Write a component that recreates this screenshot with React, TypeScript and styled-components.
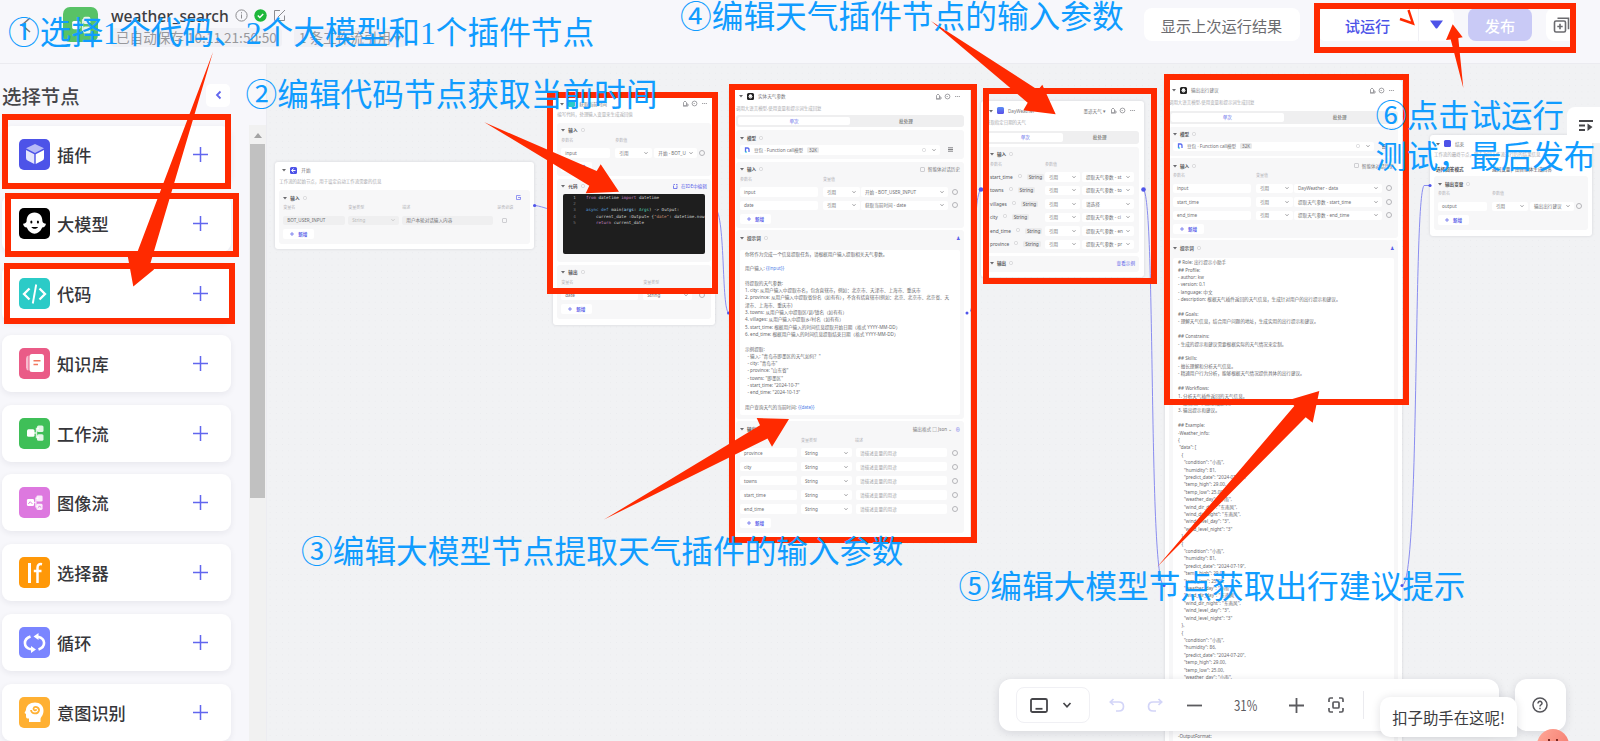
import React from 'react';
import styled, { createGlobalStyle } from 'styled-components';

const Global = createGlobalStyle`
  * { box-sizing: border-box; }
  html, body { margin: 0; padding: 0; overflow: hidden; }
  body { font-family: "Noto Sans", "Noto Sans CJK SC", sans-serif; color: #333; }
  svg { display: block; flex: none; }
`;

const Page = styled.div`
  position: relative;
  width: 1600px;
  height: 741px;
  overflow: hidden;
  display: flex;
  flex-direction: column;
  background: #f7f7fb;
`;

/* ---------- top bar ---------- */
const TopBar = styled.header`
  height: 64px;
  flex: none;
  display: flex;
  align-items: flex-start;
  border-bottom: 1px solid #ebebf0;
  padding: 7px 0 0 20px;
`;
const FlowBadge = styled.div`
  width: 35px;
  height: 35px;
  margin-left: 31px;
  border-radius: 7px;
  background: #58c266;
  display: grid;
  place-items: center;
`;
const TitleBlock = styled.div`
  margin-left: 13px;
  width: 620px;
`;
const TitleRow = styled.div`
  height: 19px;
  display: flex;
  align-items: center;
  gap: 6px;
  font-size: 15.6px;
  font-weight: 500;
  color: #3c3c40;
  margin-top: -1px;
`;
const MetaRow = styled.div`
  margin-top: 3px;
  display: flex;
  gap: 12px;
`;
const Meta = styled.span`
  height: 19px;
  padding: 0 5px;
  border-radius: 4px;
  background: #f0f0f5;
  font: 13.6px/19px "Noto Sans CJK SC", sans-serif;
  color: #98989c;
  white-space: nowrap;
`;
const Actions = styled.div`
  margin-left: auto;
  margin-right: 24px;
  display: flex;
  align-items: center;
  margin-top: 1px;
`;
const Button = styled.button<{ $w: number; $primary?: boolean; $gap?: number; $accent?: boolean }>`
  width: ${p => p.$w}px;
  height: 33px;
  margin-left: ${p => p.$gap ?? 0}px;
  padding: 0;
  border: 0;
  border-radius: 8px;
  background: ${p => (p.$primary ? '#c9caf6' : '#fff')};
  color: ${p => (p.$primary ? '#fff' : p.$accent ? '#4d53e8' : '#6b6b6f')};
  font: ${p => (p.$primary || p.$accent ? 500 : 400)} 15.2px "Noto Sans CJK SC", sans-serif;
  display: flex;
  align-items: center;
  justify-content: center;
`;
const RunGroup = styled.div`
  display: flex;
  margin-left: 18px;
  background: #fff;
  border-radius: 8px;
  & > * + * { border-left: 1px solid #f0f0f5; border-radius: 0 8px 8px 0; }
`;

/* ---------- sidebar ---------- */
const Body = styled.div`
  flex: 1;
  min-height: 0;
  display: flex;
`;
const Sidebar = styled.aside`
  width: 267px;
  flex: none;
  border-right: 1px solid #ececf1;
`;
const SideHead = styled.div`
  height: 61px;
  padding: 2px 36px 0 2px;
  display: flex;
  align-items: center;
  justify-content: space-between;
  font: 500 19.4px "Noto Sans CJK SC", sans-serif;
  color: #46464a;
`;
const Collapse = styled.div`
  width: 24px;
  height: 23px;
  margin-top: -1px;
  border-radius: 5px;
  background: #fff;
  display: grid;
  place-items: center;
`;
const SideBody = styled.div`
  display: flex;
  justify-content: space-between;
  height: 616px;
`;
const NodeList = styled.div`
  padding: 0.5px 0 0 2px;
  display: flex;
  flex-direction: column;
  gap: 12.8px;
`;
const NodeItem = styled.div`
  width: 229px;
  height: 57px;
  flex: none;
  padding: 0 23px 0 17px;
  border-radius: 9px;
  background: #fff;
  box-shadow: 0 2px 6px rgba(30, 30, 60, 0.07);
  display: flex;
  align-items: center;
  font: 500 17.2px "Noto Sans CJK SC", sans-serif;
  color: #36363a;
`;
const ItemIcon = styled.div<{ $bg: string }>`
  width: 31px;
  height: 31px;
  margin-right: 7px;
  border-radius: 5px;
  background: ${p => p.$bg};
  display: grid;
  place-items: center;
`;
const Grow = styled.span`flex: 1;`;
const ScrollTrack = styled.div`
  width: 17px;
  background: #f1f1f1;
  display: flex;
  flex-direction: column;
  align-items: center;
`;
const ScrollArrow = styled.div`
  width: 0;
  height: 0;
  margin: 8px 0 6px;
  border: 4px solid transparent;
  border-top: 0;
  border-bottom: 5px solid #a3a3a3;
`;
const Thumb = styled.div`
  width: 15px;
  height: 354px;
  background: #c1c1c1;
`;

/* ---------- canvas nodes ---------- */
const Canvas = styled.main`
  flex: 1;
  background: #f1f2f4 radial-gradient(circle, #eaebee 0.6px, transparent 0.9px) 0 0 / 6.2px 6.2px;
`;
const NodeCard = styled.section<{ $x: number; $y: number; $w: number; $h: number; $pad?: number }>`
  position: absolute;
  left: ${p => p.$x}px;
  top: ${p => p.$y}px;
  width: ${p => p.$w}px;
  height: ${p => p.$h}px;
  padding: 4px ${p => p.$pad ?? 4}px 0;
  border-radius: 3px;
  background: #fff;
  box-shadow: 0 0 3px rgba(30, 30, 50, 0.14);
  overflow: hidden;
  font-size: 4.6px;
  line-height: 6px;
  color: #66666a;
  white-space: nowrap;
`;
const Head = styled.div`
  height: 9px;
  display: flex;
  align-items: center;
  gap: 4px;
  padding: 0 3px;
  color: #77777b;
`;
const HeadIcon = styled.div<{ $bg: string }>`
  width: 7px;
  height: 7px;
  border-radius: 1.5px;
  background: ${p => p.$bg};
  display: grid;
  place-items: center;
`;
const Desc = styled.div<{ $h: number }>`
  height: ${p => p.$h}px;
  padding-top: 3px;
  font-size: 4.45px;
  color: #a8a8ac;
`;
const Tabs = styled.div`
  height: 12.5px;
  padding: 2px;
  border-radius: 3px;
  background: #efeff0;
  display: grid;
  grid-template-columns: 1fr 1fr;
  margin-bottom: 3px;
  text-align: center;
  line-height: 8px;
`;
const Tab = styled.div<{ $on?: boolean }>`
  border-radius: 2px;
  background: ${p => (p.$on ? '#fff' : 'transparent')};
  color: ${p => (p.$on ? '#5a5fe9' : '#555')};
`;
const Section = styled.div<{ $h: number }>`
  height: ${p => p.$h}px;
  margin-bottom: 2.6px;
  padding: 0 4px;
  border-radius: 3px;
  background: #f7f7f8;
  overflow: hidden;
`;
const SecHead = styled.div`
  height: 15px;
  display: flex;
  align-items: center;
  gap: 3px;
  font-weight: 600;
  color: #58585c;
`;
const Note = styled.span<{ $accent?: boolean }>`
  font-weight: 400;
  color: ${p => (p.$accent ? '#5a5fe9' : '#77777b')};
`;
const Cols = styled.div<{ $c: string; $label?: boolean }>`
  display: grid;
  grid-template-columns: ${p => p.$c};
  align-items: center;
  ${p => p.$label && 'height: 6.5px; margin-bottom: 4px; font-size: 4px; color: #b4b4b8;'}
`;
const Rows = styled.div<{ $gap?: number }>`
  display: flex;
  flex-direction: column;
  gap: ${p => p.$gap ?? 4}px;
`;
const Field = styled.div<{ $mute?: boolean; $mr?: number }>`
  height: 9.5px;
  margin-right: ${p => p.$mr ?? 3}px;
  padding: 0 4px;
  border-radius: 2px;
  background: ${p => (p.$mute ? '#efeff0' : '#fff')};
  display: flex;
  align-items: center;
  justify-content: space-between;
  overflow: hidden;
  color: #707074;
`;
const Chip = styled.span`
  padding: 0 2px;
  border-radius: 1.5px;
  background: #ebebec;
`;
const ParamName = styled.span`
  display: flex;
  gap: 5px;
  font-size: 4.8px;
  color: #59595d;
`;
const AddMark = styled.div`
  width: 31px;
  height: 10px;
  margin-top: 4px;
  border-radius: 2px;
  background: #fff;
  color: #5a5fe9;
  font-weight: 600;
  display: flex;
  align-items: center;
  justify-content: center;
  gap: 4px;
`;
const Prompt = styled.pre<{ $h: number; $lh: number }>`
  height: ${p => p.$h}px;
  margin: 3px 0 0;
  padding: 1px 5px;
  border-radius: 2px;
  background: #fff;
  overflow: hidden;
  font: 4.6px/${p => p.$lh}px "Noto Sans", "Noto Sans CJK SC", sans-serif;
  color: #68686c;
`;
const Var = styled.span`color: #4f7fe8;`;
const CodeBox = styled.pre`
  height: 60.5px;
  margin: 0 2px;
  padding: 1px 0 0 10px;
  border-radius: 2px;
  background: #1e1e1e;
  overflow: hidden;
  font: 4.2px/6.4px "DejaVu Sans Mono", monospace;
  color: #d4d4d4;
`;
const Tok = styled.span<{ $c: string }>`color: ${p => p.$c};`;
const RingMark = styled.i`
  width: 6px;
  height: 6px;
  border: 0.8px solid #b5b5b9;
  border-radius: 50%;
  display: block;
`;
const Check = styled.i`
  width: 5px;
  height: 5px;
  border: 0.8px solid #ceced2;
  border-radius: 1px;
  display: block;
`;

/* ---------- overlays ---------- */
const Layer = styled.svg`
  position: absolute;
  left: 0;
  top: 0;
  pointer-events: none;
`;
const Frame = styled.div<{ $x: number; $y: number; $r: number; $b: number }>`
  position: absolute;
  left: ${p => p.$x}px;
  top: ${p => p.$y}px;
  width: ${p => p.$r - p.$x}px;
  height: ${p => p.$b - p.$y}px;
  border: 6.5px solid #ff2a00;
`;
const Callout = styled.div<{ $x: number; $y: number; $size?: number }>`
  position: absolute;
  left: ${p => p.$x}px;
  top: ${p => p.$y}px;
  font: ${p => p.$size ?? 31.7}px/41px "Liberation Serif", "Noto Sans CJK SC", serif;
  color: #109cff;
  white-space: pre;
`;
const Dock = styled.div`
  position: absolute;
  left: 999px;
  top: 679px;
  display: flex;
  gap: 15.5px;
`;
const DockPanel = styled.div<{ $w: number }>`
  width: ${p => p.$w}px;
  height: 52px;
  border-radius: 12px;
  background: #fff;
  box-shadow: 0 2px 10px rgba(20, 20, 40, 0.12);
  display: flex;
  align-items: center;
  ${p => p.$w < 100 && 'justify-content: center;'}
`;
const ModePicker = styled.div`
  width: 74px;
  height: 36px;
  margin: 0 19px 0 17px;
  padding-right: 5px;
  border: 1px solid #f0f0f4;
  border-radius: 8px;
  display: flex;
  align-items: center;
  justify-content: center;
  gap: 14px;
`;
const Zoom = styled.span`
  width: 24px;
  margin: 0 31px 0 32px;
  font: 14px "Noto Sans CJK SC", sans-serif;
  color: #5b5b5f;
  transform: scaleX(0.82);
  transform-origin: left;
`;
const Divider = styled.i`
  width: 1px;
  height: 28px;
  margin-left: 19px;
  background: #ebebef;
`;
const Tip = styled.div`
  position: absolute;
  left: 1380px;
  top: 697px;
  width: 137px;
  height: 40px;
  border-radius: 10px 10px 2px 10px;
  background: #fff;
  box-shadow: 0 1px 10px rgba(20, 20, 40, 0.13);
  font: 15.4px/40px "Noto Sans CJK SC", sans-serif;
  color: #3c3c40;
  text-align: center;
`;
const Mascot = styled.div`
  position: absolute;
  left: 1537px;
  top: 729px;
  width: 32px;
  height: 32px;
  border-radius: 50%;
  background: linear-gradient(120deg, #ffa898, #f4776a);
  display: flex;
  justify-content: center;
  gap: 6px;
  padding-top: 10px;
  &::before, &::after { content: ''; width: 2px; height: 4px; background: #7b2620; }
`;
const SideTab = styled.div`
  position: absolute;
  left: 1567px;
  top: 107px;
  width: 33px;
  height: 36px;
  border-radius: 8px 0 0 8px;
  background: #fff;
  padding: 12px 0 0 11px;
`;

const Caret = ({ s = 4, c = '#77777b' }: { s?: number; c?: string }) => (
  <svg width={s} height={s} viewBox="0 0 8 8"><path d="M1 2.5 4 5.5 7 2.5" fill="none" stroke={c} strokeWidth="1.5" /></svg>
);
const Fold = () => (
  <svg width="4" height="4" viewBox="0 0 8 8"><path d="M0 2h8L4 7z" fill="#6a6a6e" /></svg>
);
const Info = () => (
  <svg width="4" height="4" viewBox="0 0 8 8"><circle cx="4" cy="4" r="3.3" fill="none" stroke="#c4c4c8" /></svg>
);
const PlusMark = () => (
  <svg width="15" height="15" viewBox="0 0 15 15"><path d="M7.5 0v15M0 7.5h15" stroke="#6166ee" strokeWidth="1.5" /></svg>
);
const AddButton = () => (
  <AddMark><svg width="4" height="4" viewBox="0 0 4 4"><path d="M2 0v4M0 2h4" stroke="#5a5fe9" strokeWidth=".7" /></svg>新增</AddMark>
);

const HeadTools = () => (
  <svg width="26" height="7" viewBox="0 0 26 7" fill="none" stroke="#8c8c90" strokeWidth=".8">
    <path d="M1.5 5.8V2.5L3 1l1.5 1.5v3.3zM4.5 4h1.5v2H1" /><circle cx="12.5" cy="3.5" r="2.4" /><path d="M11.6 3.5h1.8M20 3.5h5" strokeDasharray="1.2 .7" />
  </svg>
);
const Ghost = ({ s }: { s: number }) => (
  <svg width={s} height={s} viewBox="0 0 24 24">
    <path d="M12 1.5c-5 0-7.6 3.6-7.6 8.4-.2 1.7-1.5 2.1-3.4 2.4.3 2.3 1.7 3.4 3.6 3.6C6.2 19.700 9 21.800 12 21.800s5.800-2.100 7.400-5.900c1.900-.2 3.300-1.300 3.600-3.600-1.900-.3-3.200-.7-3.400-2.400C19.600 5.100 17 1.500 12 1.500z" fill="#fff" />
    <ellipse cx="9" cy="10.500" rx="1" ry="1.500" /><ellipse cx="15.300" cy="10.500" rx="1" ry="1.500" />
    <path d="M9 15.300h6.400c-.8 2.300-5.600 2.300-6.400 0z" />
  </svg>
);
const Blocks = ({ s = 20, pic }: { s?: number; pic?: boolean }) => (
  <svg width={s} height={s} viewBox="0 0 20 20">
    <path d="M8 10h3M14 5.500h-2.500v9H14" stroke="#fff" strokeWidth="1.400" fill="none" opacity=".8" />
    <rect x="2" y="6.300" width="7.500" height="7.500" rx="1.500" fill="#fff" />
    <rect x="12" y="2.500" width="6.500" height="6.500" rx="1.500" fill="#fff" opacity=".85" />
    <rect x="12" y="11.300" width="6.500" height="6.500" rx="1.500" fill="#fff" opacity=".85" />
    {pic && <path d="M3.500 11.500l2-2.300 2.300 2.300M13.500 15.500l1.500-1.500 2 1" stroke="#dd78df" fill="none" />}
  </svg>
);

const items: { name: string; bg: string; icon: React.ReactNode }[] = [
  { name: '插件', bg: '#4d53e8', icon: (
    <svg width="20" height="22" viewBox="0 0 20 22"><path d="M10 1l9 4.300L10 10 1 5.300z" fill="#fff" opacity=".6" /><path d="M1 7l8.300 4.200V21L3 17.800Q1 17 1 15z" fill="#fff" opacity=".85" /><path d="M19 7l-8.300 4.200V21l6.300-3.200Q19 17 19 15z" fill="#fff" /></svg>) },
  { name: '大模型', bg: '#000', icon: <Ghost s={25} /> },
  { name: '代码', bg: '#2bcbc7', icon: (
    <svg width="25" height="22" viewBox="0 0 25 22" fill="none" stroke="#fff" strokeWidth="2.300"><path d="M7.500 5.500L2 11l5.500 5.500M17.500 5.500L23 11l-5.500 5.500" /><path d="M14.200 1.500l-3.400 19" strokeWidth="1.900" /></svg>) },
  { name: '知识库', bg: '#ea5b87', icon: (
    <svg width="20" height="20" viewBox="0 0 20 20"><path d="M3.500 2.500v15Q1 17 1 14.500v-9Q1 3 3.500 2.500z" fill="#fff" opacity=".6" /><rect x="4.500" y="1" width="14.500" height="18" rx="2.500" fill="#fff" /><path d="M8.500 7.800h7M8.500 11.500h4.500" stroke="#f2785f" strokeWidth="1.500" /></svg>) },
  { name: '工作流', bg: '#3fbf58', icon: <Blocks /> },
  { name: '图像流', bg: '#dd78df', icon: <Blocks pic s={19} /> },
  { name: '选择器', bg: '#ff9808', icon: (
    <svg width="20" height="24" viewBox="0 0 20 24" fill="none" stroke="#fff"><path d="M4.500 2v20" strokeWidth="3" /><path d="M17 3.300c-3-.7-4.500.6-4.500 3.700v15M8.800 10h7.700" strokeWidth="2.500" /></svg>) },
  { name: '循环', bg: '#7a85ff', icon: (
    <svg width="23" height="20" viewBox="0 0 23 20" fill="none" stroke="#fff" strokeWidth="2.600"><path d="M7.500 3.500C0 6 0 14.500 8 16.300M15.500 16.500C23 14 23 5.500 15 3.700" /><path d="M15.500 0v7l-5-3.500zM8 13v7l5-3.500z" fill="#fff" stroke="none" /></svg>) },
  { name: '意图识别', bg: '#ffb032', icon: (
    <svg width="23" height="23" viewBox="0 0 23 23"><path d="M12 1.500c5 0 8.500 3.500 8.500 8 0 5-2.500 6-3 8.500v3H6v-3.500H4.500Q3 17.500 3 15.500V13L1.500 12 3 9C3 4.500 7 1.500 12 1.500z" fill="#fff" /><path d="M8 9c.5 4.500 7 4.500 8 .5.500-3.500-4.500-5-5.500-2-.3 2 2.500 2.500 3 .8" fill="none" stroke="#ffb032" strokeWidth="1.800" /></svg>) },
];

const Ref = ({ children, mr }: { children: React.ReactNode; mr?: number }) => (
  <Field $mr={mr}>{children}<Caret /></Field>
);

const ModelName = styled.span`
  display: flex;
  align-items: center;
  gap: 4px;
`;
const FieldTools = styled.span`
  display: flex;
  gap: 6px;
`;

const ModelSection = () => (
  <Section $h={29}>
    <SecHead><Fold />模型<Info /></SecHead>
    <Cols $c="1fr 12px">
      <Field $mr={8}>
        <ModelName>
          <svg width="6" height="6" viewBox="0 0 6 6"><path d="M1.500 5V1h2Q5 1 5 3v2" fill="none" stroke="#5a6cf0" strokeWidth="1.300" /><path d="M1 5h2" stroke="#20c5d8" /></svg>
          豆包 · Function call模型 <Chip>32K</Chip>
        </ModelName>
        <FieldTools><Info /><Caret /></FieldTools>
      </Field>
      <svg width="5" height="5" viewBox="0 0 5 5"><path d="M0 .8h5M0 2.500h5M0 4.200h5" stroke="#66666a" strokeWidth=".8" /></svg>
    </Cols>
  </Section>
);

const InputSection = ({ h, rows }: { h: number; rows: [string, string][] }) => (
  <Section $h={h}>
    <SecHead><Fold />输入<Info /><Grow /><Check /><Note>智能体对话历史</Note></SecHead>
    <Cols $c="83px 1fr" $label><span>参数名</span><span>变量值</span></Cols>
    <Rows>
      {rows.map(([n, v]) => (
        <Cols key={n} $c="83px 38px 1fr 8px">
          <Field $mr={5}>{n}</Field><Ref mr={1}>引用</Ref><Ref mr={4}>{v}</Ref><RingMark />
        </Cols>
      ))}
    </Rows>
    <AddButton />
  </Section>
);

const day = (date: string, hum: string, sky: string) => `     "condition": "${sky}",
     "humidity": ${hum},
     "predict_date": "${date}",
     "temp_high": 29.00,
     "temp_low": 25.00,
     "weather_day": "小雨",
     "wind_dir_day": "东南风",
     "wind_dir_night": "东南风",
     "wind_level_day": "3",
     "wind_level_night": "3"
   },
   {
`;

const advicePrompt = `# Role: 出行提示小助手
## Profile:
- author: kw
- version: 0.1
- language: 中文
- description: 根据天气插件返回的天气信息，生成针对用户的出行提示和建议。

## Goals:
- 理解天气信息，结合用户问题的地址，生成实用的出行提示和建议。

## Constrains:
- 生成的提示和建议需要根据实际的天气情况来定制。

## Skills:
- 擅长理解和分析天气信息。
- 精通用户行为分析，能够根据天气情况提供具体的出行建议。

## Workflows:
1. 分析天气插件返回的天气信息。
2. 结合用户问题生成提示。
3. 输出提示和建议。

## Example:
-Weather_info:
{
 "data": [
   {
${day('2024-07-18', '81', '小雨')}${day('2024-07-19', '81', '小雨')}${day('2024-07-20', '86', '小雨')}
-OutputFormat:
- 以下为根据天气信息给出的出行提示，请注意携带雨具，合理安排时间。`;

const App = () => (
  <Page lang="zh-CN">
    <Global />
    <TopBar>
      <svg width="12" height="16" viewBox="0 0 12 16" style={{ marginTop: 10 }}><path d="M10 1L2 8l8 7" fill="none" stroke="#77777b" strokeWidth="1.600" /></svg>
      <FlowBadge><Blocks s={22} /></FlowBadge>
      <TitleBlock>
        <TitleRow>
          weather_search
          <svg width="13" height="13" viewBox="0 0 13 13" fill="none" stroke="#8c8c90"><circle cx="6.500" cy="6.500" r="5.600" /><path d="M6.500 5.500v4M6.500 3.200v1.200" /></svg>
          <svg width="13" height="13" viewBox="0 0 13 13"><circle cx="6.500" cy="6.500" r="6.200" fill="#1eb83b" /><path d="M3.800 6.500l2 2 3.400-3.600" fill="none" stroke="#fff" strokeWidth="1.400" /></svg>
          <svg width="13" height="13" viewBox="0 0 13 13" fill="none" stroke="#8c8c90"><path d="M7 1.500H1.500v10h10V6.500M5 8l7-7" /></svg>
        </TitleRow>
        <MetaRow><Meta>已自动保存 10:11 21:50:50</Meta><Meta>1 条工作流引用 ▾</Meta></MetaRow>
      </TitleBlock>
      <Actions>
        <Button $w={156}>显示上次运行结果</Button>
        <RunGroup>
          <Button $w={100} $accent>试运行</Button>
          <Button $w={36}><svg width="13" height="9" viewBox="0 0 13 9"><path d="M0 .5h13L7.500 8q-1 1-2 0z" fill="#4d53e8" /></svg></Button>
        </RunGroup>
        <Button $w={64} $gap={14.5} $primary>发布</Button>
        <Button $w={30} $gap={14}><svg width="17" height="16" viewBox="0 0 17 16" fill="none" stroke="#6b6b6f" strokeWidth="1.600"><rect x="1.500" y="4" width="11" height="11" rx="1.500" /><path d="M4.500 1.300h11v11M7 6.800v5.400M4.300 9.500h5.400" /></svg></Button>
      </Actions>
    </TopBar>

    <Body>
      <Sidebar>
        <SideHead>选择节点
          <Collapse><svg width="7" height="10" viewBox="0 0 7 10"><path d="M5.500 1.500L2 5l3.500 3.500" fill="none" stroke="#6166ee" strokeWidth="1.800" /></svg></Collapse>
        </SideHead>
        <SideBody>
          <NodeList>
            {items.map(i => (
              <NodeItem key={i.name}><ItemIcon $bg={i.bg}>{i.icon}</ItemIcon><Grow>{i.name}</Grow><PlusMark /></NodeItem>
            ))}
          </NodeList>
          <ScrollTrack><ScrollArrow /><Thumb /></ScrollTrack>
        </SideBody>
      </Sidebar>
      <Canvas />
    </Body>

    <Layer width="1600" height="741" fill="none" stroke="#8a8df0" strokeWidth="1">
      <path d="M535 205.500C545 207 548 210 556 210M714 208C726 208 721 312 729 313M968 313C980 313 970 189.500 982 189.500M1143 189.500C1156 189.500 1148 585 1164 585.500M1402 585.500C1420 585 1413 200 1424 185.500H1430" />
    </Layer>

    <NodeCard $x={275.3} $y={161.7} $w={259} $h={87.500}>
      <Head><Fold /><HeadIcon $bg="#4d53e8"><svg width="5" height="5" viewBox="0 0 5 5"><path d="M.5 2.500h4M2.500.5L.8 2.500l1.700 2" stroke="#fff" fill="none" /></svg></HeadIcon>开始</Head>
      <Desc $h={15.500}>工作流的起始节点，用于设定启动工作流需要的信息</Desc>
      <Section $h={54}>
        <SecHead><Fold />输入<Info /><Grow /><svg width="5" height="5" viewBox="0 0 5 5" style={{ marginRight: 5 }}><path d="M4.500 2.500v2h-4v-4h4M2 2.500h3" fill="none" stroke="#7a7ef0" strokeWidth=".8" /></svg></SecHead>
        <Cols $c="65px 54px 95px 1fr" $label><span>变量名</span><span>变量类型</span><span>描述</span><span>是否必填</span></Cols>
        <Cols $c="65px 54px 100px 1fr">
          <Field $mute>BOT_USER_INPUT</Field><Field $mute style={{ color: '#bbb' }}>String<Caret c="#bbb" /></Field><Field $mute $mr={9}>用户本轮对话输入内容</Field><Check />
        </Cols>
        <AddButton />
      </Section>
    </NodeCard>

    <NodeCard $x={553.3} $y={95} $w={161.500} $h={229.500}>
      <Head><Fold /><HeadIcon $bg="#2bcbc7" />获取当前时间<Grow /><HeadTools /></Head>
      <Desc $h={14.500}>编写代码，处理输入变量来生成返回值</Desc>
      <Section $h={53.500}>
        <SecHead><Fold />输入<Info /></SecHead>
        <Cols $c="54px 1fr" $label><span>参数名</span><span>参数值</span></Cols>
        <Cols $c="54px 39px 1fr 8px"><Field $mr={5}>input</Field><Ref mr={2}>引用</Ref><Ref mr={2}>开始 - BOT_U</Ref><RingMark /></Cols>
        <AddButton />
      </Section>
      <Section $h={83.500}>
        <SecHead><Fold />代码<Info /><Grow /><svg width="5" height="5" viewBox="0 0 5 5"><path d="M.5 1.500v3h3.500v-3M.5.5H2M3 .5h1.500" fill="none" stroke="#5a5fe9" strokeWidth=".8" /></svg><Note $accent>在IDE中编辑</Note></SecHead>
        <CodeBox>
          <Tok $c="#aaa">1   </Tok> <Tok $c="#c586c0">from</Tok> datetime <Tok $c="#c586c0">import</Tok> datetime{'\n'}
          <Tok $c="#777">2</Tok>{'\n'}
          <Tok $c="#777">3   </Tok> <Tok $c="#569cd6">async def</Tok> main(<Tok $c="#9cdcfe">args</Tok>: <Tok $c="#4ec9b0">Args</Tok>) -&gt; Output:{'\n'}
          <Tok $c="#777">4   </Tok>     current_date :Output= {'{'}<Tok $c="#ce9178">"date"</Tok>: datetime.now(){'}'}{'\n'}
          <Tok $c="#777">5   </Tok>     <Tok $c="#c586c0">return</Tok> current_date
        </CodeBox>
      </Section>
      <Section $h={54}>
        <SecHead><Fold />输出<Info /></SecHead>
        <Cols $c="82px 1fr" $label><span>变量名</span><span>变量类型</span></Cols>
        <Cols $c="82px 1fr 8px"><Field $mr={5}>date</Field><Ref mr={7}>String</Ref><RingMark /></Cols>
        <AddButton />
      </Section>
    </NodeCard>

    <NodeCard $x={730} $y={86.500} $w={240} $h={454} $pad={6}>
      <Head style={{ height: 11 }}><Fold /><HeadIcon $bg="#222"><Ghost s={5} /></HeadIcon>实体天气参数<Grow /><HeadTools /></Head>
      <Desc $h={13}>调用大语言模型,使用变量和提示词生成回复</Desc>
      <Tabs><Tab $on>单次</Tab><Tab>批处理</Tab></Tabs>
      <ModelSection />
      <InputSection h={66} rows={[['input', '开始 - BOT_USER_INPUT'], ['date', '获取当前时间 - date']]} />
      <Section $h={188.500}>
        <SecHead style={{ height: 16.500 }}><Fold />提示词<Info /><Grow /><Note $accent>♟</Note></SecHead>
        <Prompt $h={165} $lh={7.3}>{`你将作为完成一个信息提取任务，请根据用户输入提取相关天气参数。

用户输入: `}<Var>{'{{input}}'}</Var>{`

待提取的天气参数:
1. city: 从用户输入中提取市名，包含直辖市，例如：北京市、天津市、上海市、重庆市
2. province: 从用户输入中提取省份名（如有有），不含有括直辖市(例如：北京、北京市、北京省、天
津市、上海市、重庆市)
3. towns: 从用户输入中提取区/县/镇名（如有有）
4. villages: 从用户输入中提取乡/村名（如有有）
5. start_time: 根据用户输入的时间信息提取开始日期（格式 YYYY-MM-DD）
6. end_time: 根据用户输入的时间信息提取结束日期（格式 YYYY-MM-DD）

示例提取:
  - 输入: "青岛市即墨区的天气如何？"
  - city: "青岛市"
  - province: "山东省"
  - towns: "即墨区"
  - start_time: "2024-10-7"
  - end_time: "2024-10-13"

用户查询天气的当前时间: `}<Var>{'{{date}}'}</Var></Prompt>
      </Section>
      <Section $h={112}>
        <SecHead style={{ height: 16 }}><Fold />输出<Grow /><Note>输出格式 □  Json ⌄</Note><Note $accent>⊕</Note></SecHead>
        <Cols $c="61px 54px 1fr" $label><span>变量名</span><span>变量类型</span><span>描述</span></Cols>
        <Rows $gap={4.6}>
          {['province', 'city', 'towns', 'start_time', 'end_time'].map(n => (
            <Cols key={n} $c="61px 55px 1fr 8px"><Field $mr={4}>{n}</Field><Ref mr={4}>String</Ref><Field $mr={5} style={{ color: '#a4a4a8' }}>请描述变量的用途</Field><RingMark /></Cols>
          ))}
        </Rows>
        <AddButton />
      </Section>
    </NodeCard>

    <NodeCard $x={981} $y={101} $w={163} $h={176} $pad={5}>
      <Head style={{ height: 11 }}><Fold /><HeadIcon $bg="linear-gradient(#5a8cf5,#5a4fe8)" />DayWeather<Grow /><span>墨迹天气 ▾</span><HeadTools /></Head>
      <Desc $h={15}>获取指定日期的天气</Desc>
      <Tabs><Tab $on>单次</Tab><Tab>批处理</Tab></Tabs>
      <Section $h={106.500}>
        <SecHead><Fold />输入<Info /></SecHead>
        <Cols $c="55px 1fr" $label><span>参数名</span><span>参数值</span></Cols>
        <Rows $gap={4}>
          {[['start_time', '提取天气参数 - st'], ['towns', '提取天气参数 - to'], ['villages', '请选择'], ['city', '提取天气参数 - ci'], ['end_time', '提取天气参数 - en'], ['province', '提取天气参数 - pr']].map(([n, v]) => (
            <Cols key={n} $c="55px 37px 1fr"><ParamName>{n} <Info /><Chip>String</Chip></ParamName><Ref mr={2}>引用</Ref><Ref mr={1}>{v}</Ref></Cols>
          ))}
        </Rows>
      </Section>
      <Section $h={16.500}>
        <SecHead><Fold />输出<Info /><Grow /><Note $accent>查看示例</Note></SecHead>
      </Section>
    </NodeCard>

    <NodeCard $x={1165} $y={80} $w={237} $h={670}>
      <Head style={{ height: 12 }}><Fold /><HeadIcon $bg="#222"><Ghost s={5} /></HeadIcon>输出出行建议<Grow /><HeadTools /></Head>
      <Desc $h={15}>调用大语言模型,使用变量和提示词生成回复</Desc>
      <Tabs><Tab $on>单次</Tab><Tab>批处理</Tab></Tabs>
      <ModelSection />
      <InputSection h={79.500} rows={[['input', 'DayWeather - data'], ['start_time', '提取天气参数 - start_time'], ['end_time', '提取天气参数 - end_time']]} />
      <Section $h={520}>
        <SecHead><Fold />提示词<Info /><Grow /><Note $accent>♟</Note></SecHead>
        <Prompt $h={500} $lh={7.4}>{advicePrompt}</Prompt>
      </Section>
    </NodeCard>

    <NodeCard $x={1430} $y={135} $w={161.700} $h={101}>
      <Head style={{ padding: '0 2px' }}><Fold /><HeadIcon $bg="#4d53e8" />结束</Head>
      <Desc $h={14}>工作流的最终节点，用于返回工作流运行后的结果信息</Desc>
      <Cols $c="56px 1fr" style={{ height: 14, paddingLeft: 2, color: '#55555a' }}><b>选择回答模式</b><span>返回变量，由智能体生成回答</span></Cols>
      <Section $h={53.500}>
        <SecHead><Fold />输出变量<Info /></SecHead>
        <Cols $c="54px 1fr" $label><span>参数名</span><span>参数值</span></Cols>
        <Cols $c="54px 38px 1fr 8px"><Field $mr={5}>output</Field><Ref mr={2}>引用</Ref><Ref mr={2}>输出出行建议</Ref><RingMark /></Cols>
        <AddButton />
      </Section>
    </NodeCard>

    <Layer width="1600" height="741" fill="#4f55ea">
      <circle cx="534.600" cy="205.500" r="1.600" /><circle cx="728.500" cy="313" r="1.500" /><circle cx="967" cy="313" r="1.500" />
      <circle cx="981" cy="189.500" r="2.300" /><circle cx="1143.500" cy="189.500" r="2.300" /><circle cx="1164" cy="585.500" r="1.500" />
      <circle cx="1402" cy="585.500" r="1.500" /><circle cx="1430" cy="185.500" r="1.600" />
    </Layer>

    <SideTab>
      <svg width="16" height="13" viewBox="0 0 16 13"><path d="M1 2h14M1 6.500h6M1 11h6" stroke="#46464a" strokeWidth="1.900" /><path d="M9.500 4.500L14.500 8l-5 4z" fill="#46464a" /></svg>
    </SideTab>

    <Dock>
      <DockPanel $w={500}>
        <ModePicker>
          <svg width="18" height="15" viewBox="0 0 18 15" fill="none" stroke="#46464a" strokeWidth="1.800"><rect x="1" y="1" width="16" height="13" rx="1.500" /><path d="M5.500 10.800h7" /></svg>
          <svg width="10" height="8" viewBox="0 0 10 8"><path d="M1.500 2L5 5.800 8.500 2" fill="none" stroke="#46464a" strokeWidth="1.700" /></svg>
        </ModePicker>
        <svg width="16" height="14" viewBox="0 0 16 14" fill="none" stroke="#d3d5f8" strokeWidth="1.700"><path d="M4.500 1L1.300 4l3.200 3M1.300 4h8.500q4.700 0 4.700 4.500T9.800 13H7" /></svg>
        <svg width="16" height="14" viewBox="0 0 16 14" style={{ marginLeft: 22 }} fill="none" stroke="#d3d5f8" strokeWidth="1.700"><path d="M11.500 1l3.200 3-3.200 3M14.700 4H6.200Q1.500 4 1.500 8.500T6.200 13H9" /></svg>
        <svg width="15" height="15" viewBox="0 0 15 15" style={{ marginLeft: 24 }}><path d="M0 7.500h15" stroke="#5b5b5f" strokeWidth="1.800" /></svg>
        <Zoom>31%</Zoom>
        <svg width="15" height="15" viewBox="0 0 15 15"><path d="M0 7.500h15M7.500 0v15" stroke="#5b5b5f" strokeWidth="1.800" /></svg>
        <svg width="16" height="16" viewBox="0 0 16 16" style={{ marginLeft: 24 }} fill="none" stroke="#5b5b5f" strokeWidth="1.700"><path d="M1 5V2.500Q1 1 2.500 1H5M11 1h2.500Q15 1 15 2.500V5M15 11v2.500q0 1.500-1.500 1.500H11M5 15H2.500Q1 15 1 13.500V11" /><rect x="5" y="5" width="6" height="6" rx="1" /></svg>
        <Divider />
      </DockPanel>
      <DockPanel $w={51.500}>
        <svg width="16" height="16" viewBox="0 0 16 16" fill="none" stroke="#55555a" strokeWidth="1.500"><circle cx="8" cy="8" r="7" /><path d="M6 6.500c0-3 4.200-2.700 4 0C9.900 7.800 8 7.800 8 9.500M8 10.700v1.500" /></svg>
      </DockPanel>
    </Dock>
    <Tip>扣子助手在这呢!</Tip>
    <Mascot />

    <Frame $x={2.300} $y={114} $r={231} $b={189} />
    <Frame $x={5} $y={193} $r={238.700} $b={256.700} />
    <Frame $x={3.500} $y={263} $r={235} $b={323.700} />
    <Frame $x={547.300} $y={91.700} $r={717.700} $b={294.500} />
    <Frame $x={729.300} $y={83.700} $r={976.700} $b={542.700} />
    <Frame $x={982.700} $y={87.700} $r={1157.300} $b={284} />
    <Frame $x={1163.700} $y={74.300} $r={1409.500} $b={405} />
    <Frame $x={1314.300} $y={3.300} $r={1575.700} $b={53.500} />
    <Layer width="1600" height="741" fill="#ff2a00">
      <path d="M213 52L137 253 127.700 256 133.300 286.500 154 269.500 150.500 263z" />
      <path d="M484.300 122.300L589.300 185.700 585.700 193.300 619 191.700 600.700 164.300 596.700 171z" />
      <path d="M604 519.500L760 425.300 756.700 418 789 419 772 446.700 767.500 438.500z" />
      <path d="M931 21L1027.700 102.700 1023.300 110.300 1055.700 114.300 1042.300 84.700 1038 90z" />
      <path d="M1157.300 566.700L1294.300 406 1289 400 1319.300 391 1312.700 422.700 1305.700 417.300z" />
      <path d="M1463.300 88L1450.700 39.500 1446 40 1452.700 24.300 1462.700 37.300 1458.300 38z" />
      <path d="M1400 19L1413 23.500 1408.500 10" fill="none" stroke="#ff2a00" strokeWidth="2.400" />
    </Layer>

    <Callout $x={8} $y={13}>①选择1个代码、2个大模型和1个插件节点</Callout>
    <Callout $x={245.500} $y={75}>②编辑代码节点获取当前时间</Callout>
    <Callout $x={301} $y={531.500}>③编辑大模型节点提取天气插件的输入参数</Callout>
    <Callout $x={680} $y={-3}>④编辑天气插件节点的输入参数</Callout>
    <Callout $x={958.500} $y={567}>⑤编辑大模型节点获取出行建议提示</Callout>
    <Callout $x={1375.500} $y={96} $size={31.400}>{'⑥点击试运行\n测试，最后发布'}</Callout>
  </Page>
);

export default App;
